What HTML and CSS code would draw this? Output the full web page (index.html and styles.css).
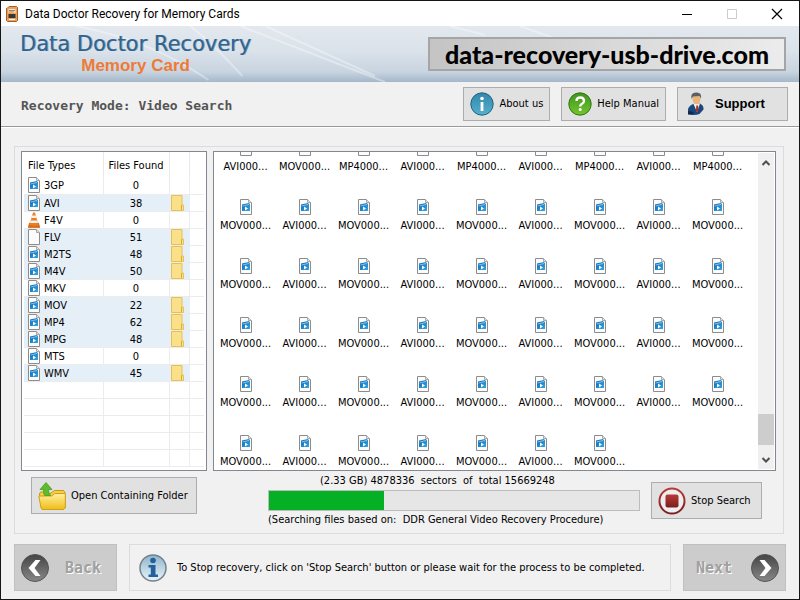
FILE: index.html
```html
<!DOCTYPE html>
<html lang="en">
<head>
    <meta charset="UTF-8">
    <meta name="viewport" content="width=device-width, initial-scale=1.0">
    <title>Data Doctor Recovery for Memory Cards</title>
    <link rel="stylesheet" href="styles.css">
</head>
<body>
    <svg class="sprite" aria-hidden="true">
        <defs>
            <linearGradient id="blue" x1="0" y1="0" x2="1" y2="1">
                <stop offset="0" stop-color="#0b66b4"/>
                <stop offset="1" stop-color="#35a6e0"/>
            </linearGradient>
            <linearGradient id="teal" x1="0" y1="0" x2="0" y2="1">
                <stop offset="0" stop-color="#3387a8"/>
                <stop offset="1" stop-color="#55b0cf"/>
            </linearGradient>
            <linearGradient id="green" x1="0" y1="0" x2="0" y2="1">
                <stop offset="0" stop-color="#3f9420"/>
                <stop offset="1" stop-color="#72c62c"/>
            </linearGradient>
            <linearGradient id="gold" x1="0" y1="0" x2="0" y2="1">
                <stop offset="0" stop-color="#fff0a0"/>
                <stop offset="1" stop-color="#efbd17"/>
            </linearGradient>
            <linearGradient id="red" x1="0" y1="0" x2="0" y2="1">
                <stop offset="0" stop-color="#b83a38"/>
                <stop offset="1" stop-color="#7c1d1f"/>
            </linearGradient>
            <linearGradient id="dark" x1="0" y1="0" x2="0" y2="1">
                <stop offset="0" stop-color="#444"/>
                <stop offset="1" stop-color="#888"/>
            </linearGradient>
            <linearGradient id="silver" x1="0" y1="0" x2="0" y2="1">
                <stop offset="0" stop-color="#8fb4cc"/>
                <stop offset="1" stop-color="#e8f4fa"/>
            </linearGradient>
        </defs>
        <symbol id="page" viewBox="0 0 12 16">
            <path d="M.5.5h8l3 3v12H.5z" fill="#fcfcfc" stroke="#8c8c8c"/>
            <path d="M8.500.5v3h3" fill="#e4e4e4" stroke="#a8a8a8"/>
        </symbol>
        <symbol id="video" viewBox="0 0 12 16">
            <path d="M.5.5h8l3 3v12H.5z" fill="#fcfcfc" stroke="#8c8c8c"/>
            <path d="M8.500.5v3h3" fill="#e4e4e4" stroke="#a8a8a8"/>
            <path d="M2 5.500l7-1.500 1 1.500v6.500H2z" fill="url(#blue)"/>
            <path d="M2.500 7l6.500-1.500" stroke="#9bd4f5" stroke-width=".8"/>
            <path d="M5 7.500l3 2-3 2z" fill="#fff"/>
        </symbol>
        <symbol id="cone" viewBox="0 0 12 16">
            <path d="M1.500 11h9l1.300 4.500H.2z" fill="#e56b10" stroke="#b9550f" stroke-width=".6"/>
            <path d="M5 .5h2L10.500 13q-4.500 1.500-9 0z" fill="#ef7d1a"/>
            <path d="M4.200 3.500h3.600l.7 2.500H3.500zM2.800 8.500h6.400l.8 2.500H2z" fill="#f2f2f2"/>
        </symbol>
        <symbol id="folder" viewBox="0 0 14 16">
            <path d="M.5.5h10.500v9.500h1.500v5.500H.5z" fill="#fbe08a" stroke="#e6c155"/>
            <path d="M10.500 15v-5" stroke="#d9ad30"/>
        </symbol>
    </svg>

    <div class="window">
        <header class="titlebar">
            <svg class="app-icon" viewBox="0 0 12 16" aria-hidden="true">
                <path d="M1 2.500L3 .5h7.500l1 1v13l-1 1H1.500l-1-1V2.500z" fill="#e8a05c" stroke="#a85c22"/>
                <path d="M2.500 3h7v4h-7z" fill="#fbe3c7"/>
                <path d="M3 4.500h6M3 6h5" stroke="#8a6444" stroke-width=".8"/>
                <path d="M2.500 8h7v4h-7z" fill="#3c3530"/>
                <path d="M3 13.500h6" stroke="#fff"/>
            </svg>
            <span class="caption">Data Doctor Recovery for Memory Cards</span>
            <div class="window-buttons">
                <button type="button" aria-label="Minimize"><svg viewBox="0 0 12 12"><path d="M1 6.500h10" stroke="#000"/></svg></button>
                <button type="button" aria-label="Maximize" disabled><svg viewBox="0 0 12 12"><path d="M1.500 1.500h9v9h-9z" fill="none" stroke="#ccc"/></svg></button>
                <button type="button" aria-label="Close"><svg viewBox="0 0 12 12"><path d="M1 1l10 10M11 1L1 11" stroke="#000" stroke-width="1.200"/></svg></button>
            </div>
        </header>

        <div class="banner">
            <svg class="rays" viewBox="0 0 800 56" preserveAspectRatio="none" aria-hidden="true">
                <path d="M75 0Q150 14 208 54M190 0Q215 20 242 50M240 0L385 56M265 0L375 50M450 0L485 9M520 0L560 14" fill="none" stroke="#fff" stroke-opacity=".35" stroke-width="2"/>
            </svg>
            <div class="brand">
                <h1>Data Doctor Recovery</h1>
                <p>Memory Card</p>
            </div>
            <div class="site">data-recovery-usb-drive.com</div>
        </div>

        <div class="toolbar">
            <h2>Recovery Mode: Video Search</h2>
            <button type="button" class="btn">
                <svg class="round" viewBox="0 0 24 24" aria-hidden="true">
                    <circle cx="12" cy="12" r="11.200" fill="url(#teal)" stroke="#22637f"/>
                    <circle cx="12" cy="6.500" r="1.800" fill="#fff"/>
                    <path d="M10.600 10h2.800v9h-2.800z" fill="#fff"/>
                </svg>
                About us
            </button>
            <button type="button" class="btn">
                <svg class="round" viewBox="0 0 24 24" aria-hidden="true">
                    <circle cx="12" cy="12" r="11.200" fill="url(#green)" stroke="#2e7617"/>
                    <path d="M8.500 9q0-3.500 3.700-3.500T16 9q0 1.600-2 2.800-1.800 1-1.800 2.700" fill="none" stroke="#fff" stroke-width="2.300"/>
                    <circle cx="12.200" cy="17.500" r="1.500" fill="#fff"/>
                </svg>
                Help Manual
            </button>
            <button type="button" class="btn support">
                <svg viewBox="0 0 18 24" aria-hidden="true">
                    <path d="M1 22q-1-8 5-10l7-.5q4 2 3.500 6l-4 4.500Q7 24 1 22z" fill="#1c477b"/>
                    <path d="M6.500 12l3.500 8 3-8.500z" fill="#eef3f8"/>
                    <path d="M9.300 13.500h1.800l.3 5-1.200 1.500-1.200-1.500z" fill="#b02c24"/>
                    <ellipse cx="9.500" cy="7" rx="4" ry="5.300" fill="#e9b57b"/>
                    <path d="M4.500 7Q3 .5 9 .5q6-.5 5 6L12.500 4 6 4.500z" fill="#5a6064"/>
                    <path d="M1 19l6 1-1 2.500H1z" fill="#0d2a50"/>
                </svg>
                <span>Support</span>
            </button>
        </div>

        <main class="group">
            <div class="panels">
                <div class="panel types">
                    <table>
                        <thead>
                            <tr><th>File Types</th><th>Files Found</th><th></th><th></th></tr>
                        </thead>
                        <tbody id="types"></tbody>
                    </table>
                </div>
                <div class="panel files">
                    <ul id="files"></ul>
                    <div class="scrollbar">
                        <button type="button" aria-label="Scroll up"><svg viewBox="0 0 10 8"><path d="M1.500 6L5 2.500 8.500 6" fill="none" stroke="#505050" stroke-width="2"/></svg></button>
                        <div class="thumb"></div>
                        <button type="button" aria-label="Scroll down"><svg viewBox="0 0 10 8"><path d="M1.500 2L5 5.500 8.500 2" fill="none" stroke="#505050" stroke-width="2"/></svg></button>
                    </div>
                </div>
            </div>

            <div class="status">
                <button type="button" class="btn open">
                    <svg viewBox="0 0 28 28" aria-hidden="true">
                        <path d="M1.500 12l1-2h7l2 2 5-3.500h9l1.500 2V26L25 27.500H4z" fill="#f5cf4b" stroke="#c69412"/>
                        <path d="M.8 14h13l3-2.500h10.500V26L25 27.500H4.500L3 26z" fill="url(#gold)" stroke="#d19f17"/>
                        <path d="M8 .5l6 7h-3.500q0 4 2 6H6.500Q5 11 5.500 7.500H2z" fill="#5dbb2c" stroke="#3f9a1b" stroke-width=".7"/>
                    </svg>
                    Open Containing Folder
                </button>
                <div class="progress">
                    <p class="sectors" id="sectors">(2.33 GB) 4878336&nbsp; sectors&nbsp; of&nbsp; total 15669248</p>
                    <div class="track" role="progressbar" aria-labelledby="sectors" aria-valuenow="31" aria-valuemin="0" aria-valuemax="100">
                        <div class="bar" style="width: 31%"></div>
                    </div>
                    <p>(Searching files based on:&nbsp; DDR General Video Recovery Procedure)</p>
                </div>
                <button type="button" class="btn stop">
                    <svg viewBox="0 0 28 28" aria-hidden="true">
                        <circle cx="14" cy="14" r="12.500" fill="#eee" stroke="url(#red)" stroke-width="2"/>
                        <rect x="7.500" y="7.500" width="13" height="13" rx="2" fill="url(#red)"/>
                    </svg>
                    Stop Search
                </button>
            </div>
        </main>

        <footer class="footer">
            <button type="button" class="nav" disabled>
                <svg viewBox="0 0 28 28" aria-hidden="true">
                    <circle cx="14" cy="14" r="13.500" fill="url(#dark)" stroke="#555"/>
                    <path d="M14.500 6h5l-6 8 6 8h-5l-7-8z" fill="#fff"/>
                </svg>
                <span>Back</span>
            </button>
            <div class="hint">
                <svg viewBox="0 0 28 28" aria-hidden="true">
                    <circle cx="14" cy="14" r="13" fill="url(#silver)" stroke="#75818c" stroke-width="1.500"/>
                    <circle cx="14" cy="6.500" r="2.800" fill="#23619c"/>
                    <path d="M9.500 11h7v9.500H19V23H9.500v-2.500h2.300v-7H9.500z" fill="#23619c"/>
                </svg>
                <p>To Stop recovery, click on 'Stop Search' button or please wait for the process to be completed.</p>
            </div>
            <button type="button" class="nav" disabled>
                <span>Next</span>
                <svg viewBox="0 0 28 28" aria-hidden="true">
                    <circle cx="14" cy="14" r="13.500" fill="url(#dark)" stroke="#555"/>
                    <path d="M13.500 6h-5l6 8-6 8h5l7-8z" fill="#fff"/>
                </svg>
            </button>
        </footer>
    </div>
    <script src="script.js"></script>
</body>
</html>
```
FILE: styles.css
```css
*{
    margin:0;
    padding:0;
    box-sizing:border-box;
}
body{
    font-family:"DejaVu Sans Condensed","Noto Sans",sans-serif;
    font-size:11px;
    line-height:14px;
    color:#000;
}
button{
    font:inherit;
    color:inherit;
}
svg{
    display:block;
    flex:none;
}
.sprite{
    position:absolute;
    width:0;
    height:0;
}
.window{
    display:flex;
    flex-direction:column;
    min-height:100vh;
    background:#f1f1f1;
    border:1px solid #161616;
}

/* title bar */
.titlebar{
    display:flex;
    align-items:center;
    height:25px;
    padding-left:5px;
    background:#fff;
}
.app-icon{
    width:12px;
    height:16px;
}
.caption{
    flex:1;
    padding-left:7px;
    font-family:Roboto,sans-serif;
    font-size:12px;
}
.window-buttons{
    display:flex;
}
.window-buttons button{
    display:grid;
    place-items:center;
    width:45px;
    height:25px;
    border:none;
    background:none;
}
.window-buttons svg{
    width:12px;
    height:12px;
}

/* banner */
.banner{
    position:relative;
    display:flex;
    justify-content:space-between;
    align-items:center;
    height:56px;
    padding:0 13px 0 19px;
    background:linear-gradient(#e3e8ee,#dae2ea 45%,#c8d4e0 82%,#a4b7ca);
}
.rays{
    position:absolute;
    inset:0;
    width:100%;
    height:100%;
}
.brand{
    position:relative;
    text-align:center;
}
.brand h1{
    font-family:"DejaVu Sans",sans-serif;
    font-size:21px;
    font-weight:normal;
    line-height:24px;
    color:#30648f;
    text-shadow:1px 0 rgba(48,100,143,.5);
}
.brand p{
    font-family:"Liberation Sans",sans-serif;
    font-size:17px;
    font-weight:bold;
    line-height:20px;
    color:#ee7a36;
}
.site{
    position:relative;
    padding:0 15px;
    border:2px solid #a5a5a5;
    background:linear-gradient(90deg,#c4c4c4,#ececec);
    font-family:Lato,sans-serif;
    font-size:25px;
    font-weight:900;
    line-height:30px;
}

/* toolbar */
.toolbar{
    display:flex;
    align-items:center;
    gap:11px;
    padding:5px 11px 5px 20px;
    border-bottom:1px solid #999;
    box-shadow:0 1px #fff;
}
.toolbar h2{
    flex:1;
    padding-top:4px;
    font-family:"DejaVu Sans Mono",monospace;
    font-size:13px;
    color:#555;
}
.btn{
    display:flex;
    align-items:center;
    gap:5px;
    height:34px;
    padding:0 6px;
    border:1px solid #adadad;
    background:#e1e1e1;
    white-space:nowrap;
}
.round{
    width:24px;
    height:24px;
}
.support{
    width:111px;
    padding:0 9px;
    gap:10px;
    font-family:"Liberation Sans",sans-serif;
    font-size:13px;
    font-weight:bold;
}
.support svg{
    width:18px;
    height:24px;
}

/* group box */
.group{
    display:flex;
    flex-direction:column;
    flex:1;
    margin:19px 15px 10px 13px;
    padding:4px 7px 6px 6px;
    border:1px solid #dcdcdc;
}
.panels{
    display:flex;
    flex:1;
    gap:6px;
}
.panel{
    border:1px solid #828790;
    background:#fff;
    overflow:hidden;
}
.types{
    flex:none;
    width:186px;
    height:320px;
    padding:0 2px;
}
.types table{
    width:100%;
    table-layout:fixed;
    border-collapse:collapse;
}
.types th{
    height:25px;
    padding-top:2px;
    font-weight:normal;
    border-right:1px solid #e8e8e8;
    white-space:nowrap;
}
.types th:nth-child(1){
    width:79px;
    padding-left:4px;
    text-align:left;
}
.types th:nth-child(2){
    width:66px;
}
.types th:nth-child(3){
    width:20px;
}
.types th:last-child,
.types td:last-child{
    border-right:none;
}
.types td{
    height:17px;
    border:solid #ececec;
    border-width:0 1px 1px 0;
    text-align:center;
}
.types .count{
    padding-top:2px;
}
.types .found td:not(:last-child){
    background:#e5eff8;
    border-right-color:#e5eff8;
}
.name{
    display:flex;
    gap:4px;
    height:16px;
    padding-left:4px;
    line-height:18px;
}
.name svg{
    width:12px;
    height:16px;
}
.types td > svg{
    width:14px;
    height:16px;
    margin-left:1px;
}
.files{
    display:flex;
    flex:1;
    height:320px;
}
.files ul{
    display:grid;
    grid-template-columns:repeat(9,59px);
    grid-auto-rows:59px;
    align-content:end;
    flex:1;
    padding-left:2px;
    list-style:none;
}
.files li{
    display:flex;
    flex-direction:column;
    align-items:center;
    justify-content:flex-end;
    gap:4px;
    padding-bottom:1px;
}
.files li svg{
    width:12px;
    height:16px;
}
.scrollbar{
    display:flex;
    flex-direction:column;
    width:16px;
    margin:1px 1px 1px 0;
    background:#f0f0f0;
}
.scrollbar button{
    display:grid;
    place-items:center;
    height:19px;
    border:none;
    background:none;
}
.scrollbar svg{
    width:10px;
    height:8px;
}
.thumb{
    height:31px;
    margin-top:auto;
    margin-bottom:5px;
    background:#cdcdcd;
}

/* progress */
.status{
    display:flex;
    align-items:center;
    padding:3px 14px 0 10px;
}
.open,
.stop{
    height:37px;
}
.open{
    align-self:flex-start;
    margin-top:3px;
    width:166px;
}
.open svg,
.stop svg,
.nav svg,
.hint svg{
    width:28px;
    height:28px;
}
.stop{
    width:111px;
}
.progress{
    flex:1;
    margin:0 11px 0 71px;
}
.sectors{
    padding-left:52px;
}
.track{
    height:21px;
    margin:2px 0;
    border:1px solid #bcbcbc;
    background:#e6e6e6;
}
.bar{
    height:100%;
    background:#06b025;
}

/* footer */
.footer{
    display:flex;
    gap:12px;
    padding:0 13px 8px 13px;
}
.nav{
    display:flex;
    align-items:center;
    justify-content:space-between;
    width:103px;
    height:47px;
    padding:0 15px 0 6px;
    border:1px solid #c0c0c0;
    background:#cccccc;
    color:#a0a0a0;
    font-family:"DejaVu Sans Mono",monospace;
    font-size:15px;
    font-weight:bold;
    text-shadow:1px 1px #fff;
}
.nav:last-child{
    padding:0 6px 0 12px;
}
.hint{
    display:flex;
    align-items:center;
    flex:1;
    gap:10px;
    padding-left:9px;
    border:1px solid #dcdcdc;
}
```
FILE: script.js
```js
const types = [
    ['3GP', 0], ['AVI', 38], ['F4V', 0], ['FLV', 51], ['M2TS', 48], ['M4V', 50],
    ['MKV', 0], ['MOV', 22], ['MP4', 62], ['MPG', 48], ['MTS', 0], ['WMV', 45]
];
const icons = { F4V: 'cone', FLV: 'page' };
const icon = (id) => `<svg aria-hidden="true"><use href="#${id}"/></svg>`;

const tbody = document.getElementById('types');
types.forEach(([name, count]) => {
    tbody.innerHTML += `<tr class="${count ? 'found' : ''}">
        <td><div class="name">${icon(icons[name] || 'video')}${name}</div></td>
        <td class="count">${count}</td><td>${count ? icon('folder') : ''}</td><td></td></tr>`;
});
// blank grid rows under the list
for (let i = 0; i < 5; i++) {
    tbody.innerHTML += '<tr><td></td><td></td><td></td><td></td></tr>';
}

const files = ['AVI', 'MOV', 'MP4', 'AVI', 'MP4', 'AVI', 'MP4', 'AVI', 'MP4'];
for (let row = 0; row < 5; row++) {
    const count = row === 4 ? 7 : 9;
    for (let col = 0; col < count; col++) {
        files.push(col % 2 ? 'AVI' : 'MOV');
    }
}
document.getElementById('files').innerHTML = files
    .map((type) => `<li>${icon('video')}<span>${type}000...</span></li>`)
    .join('');
```
